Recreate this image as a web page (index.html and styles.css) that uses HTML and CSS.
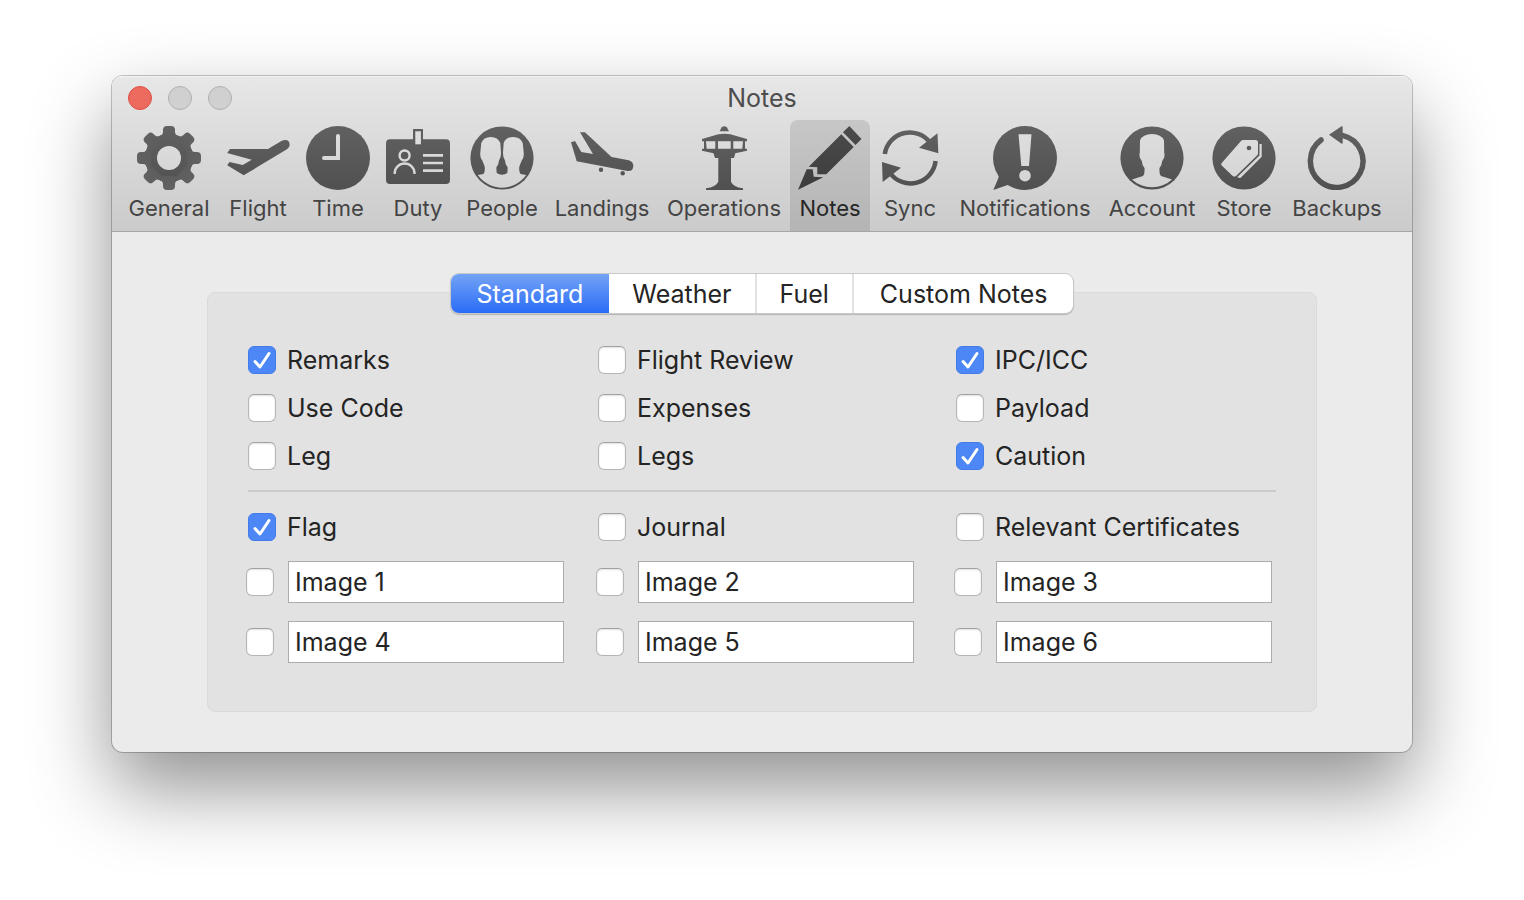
FILE: index.html
```
<!DOCTYPE html>
<html lang="en">
	<head>
		<title>Notes</title>
		<meta charset="utf-8">
		<link rel="stylesheet" href="styles.css">
	</head>

	<body>
		<!-- Shared gradients for the toolbar icons -->
		<svg class="defs" aria-hidden="true">
			<defs>
				<linearGradient id="ink" gradientUnits="userSpaceOnUse" x1="0" y1="0" x2="0" y2="64">
					<stop offset="0" stop-color="#616161"/>
					<stop offset="1" stop-color="#505050"/>
				</linearGradient>
				<linearGradient id="ink_dark" gradientUnits="userSpaceOnUse" x1="0" y1="0" x2="0" y2="64">
					<stop offset="0" stop-color="#4b4b4b"/>
					<stop offset="1" stop-color="#3c3c3c"/>
				</linearGradient>
				<linearGradient id="paper" gradientUnits="userSpaceOnUse" x1="0" y1="0" x2="0" y2="64">
					<stop offset="0" stop-color="#dfdfdf"/>
					<stop offset="1" stop-color="#d3d3d3"/>
				</linearGradient>
			</defs>
		</svg>

		<div class="window">
			<header class="header">
				<div class="titlebar">
					<div class="lights">
						<button class="light light_close" aria-label="Close"></button>
						<button class="light" aria-label="Minimize"></button>
						<button class="light" aria-label="Zoom"></button>
					</div>
					<h1 class="title">Notes</h1>
				</div>

				<nav class="toolbar">
					<button class="tool">
						<svg class="icon" viewBox="0 0 64 64">
							<defs>
								<path id="tooth" d="M26 4Q26 0 30 0H34Q38 0 38 4V6Q38 9.5 43 10.5V14H21V10.5Q26 9.5 26 6Z"/>
							</defs>
							<circle cx="32" cy="32" r="24"/>
							<use href="#tooth"/>
							<use href="#tooth" transform="rotate(45 32 32)"/>
							<use href="#tooth" transform="rotate(90 32 32)"/>
							<use href="#tooth" transform="rotate(135 32 32)"/>
							<use href="#tooth" transform="rotate(180 32 32)"/>
							<use href="#tooth" transform="rotate(225 32 32)"/>
							<use href="#tooth" transform="rotate(270 32 32)"/>
							<use href="#tooth" transform="rotate(315 32 32)"/>
							<circle class="cut" cx="32" cy="32" r="12"/>
						</svg>
						General
					</button>
					<button class="tool">
						<svg class="icon" viewBox="0 0 64 64">
							<path d="M4 23H42L55 15.3C60 12.5 64.5 14.5 63.5 19.5C63.2 21.3 62 22.6 60.5 23.5L17.7 49.3L1.2 39.2L3.5 36L16.7 39L25.7 33.7L1.2 27Z"/>
						</svg>
						Flight
					</button>
					<button class="tool">
						<svg class="icon" viewBox="0 0 64 64">
							<circle cx="32" cy="32" r="32"/>
							<path class="cut_line" stroke-width="4" stroke-linecap="round" d="M32 10V32H18"/>
						</svg>
						Time
					</button>
					<button class="tool">
						<svg class="icon" viewBox="0 0 64 64">
							<rect x="0" y="13.3" width="64" height="44.7" rx="4"/>
							<rect x="27" y="3" width="10" height="15"/>
							<rect class="cut" x="29.3" y="5.3" width="5.6" height="13"/>
							<circle class="cut_line" stroke-width="2.4" cx="18.6" cy="29.5" r="5"/>
							<path class="cut_line" stroke-width="2.4" d="M8.7 48V47A9.9 9.5 0 0 1 28.5 47V48"/>
							<path class="cut_line" stroke-width="2.7" d="M37 29.3H57M37 37H57M37 44.7H57"/>
						</svg>
						Duty
					</button>
					<button class="tool">
						<svg class="icon" viewBox="0 0 64 64">
							<circle cx="32" cy="32" r="31.6"/>
							<path class="cut" d="M7.8 49L13.5 48Q15.5 45 14.5 40L12.3 34.5Q9.7 31 10.3 26.5L11.3 17Q13.5 11 20.7 11Q28 11 30.3 17L31 26.5Q31.3 31 29 34.5Q29 38 26.3 41.5L26.7 47Q29 48.8 32 48.8Q35 48.8 37.3 47L37.7 41.5Q35 38 35 34.5Q32.7 31 33 26.5L33.7 17Q36 11 43.3 11Q50.5 11 52.7 17L53.7 26.5Q54.3 31 51.7 34.5L49.5 40Q48.5 45 50.5 48L56.2 49A29.5 29.5 0 0 1 7.8 49Z"/>
						</svg>
						People
					</button>
					<button class="tool">
						<svg class="icon" viewBox="0 0 64 64">
							<path d="M10 6.3H15L41.5 31L58.7 34.2C62 35 63.6 37.5 63.3 40.5C62.9 43.8 61 45.5 57.5 45L6.7 35.3L1 16.3L5 15L11.3 26L23 28Z"/>
							<circle cx="31" cy="43.7" r="2.2"/>
							<circle cx="52.7" cy="47.3" r="2.2"/>
						</svg>
						Landings
					</button>
					<button class="tool">
						<svg class="icon" viewBox="0 0 64 64">
							<path d="M27.7 5.3L29.5 1.5Q32.3 -1 35 1.5L37 5.3Z"/>
							<path d="M10 13L26.3 8.3Q32.3 7.3 38.3 8.3L55 13V15.3H53V22.7H55V24.7L43.3 27.3L42 32H39V55.7Q41 61 51 62.3V64H14V62.3Q24 61 26.3 55.7V32H23L21.5 27.3L10 24.7V22.7H12V15.3H10Z"/>
							<path class="cut" d="M14 15.3H23.3V22.7H14.7ZM26 15.3H38.7V22.7H26ZM41.3 15.3H51L50.3 22.7H41.3Z"/>
						</svg>
						Operations
					</button>
					<button class="tool tool_selected">
						<svg class="icon" viewBox="0 0 64 64">
							<path d="M51.3 0L63.5 13L57.5 19L45 6.3Z"/>
							<path d="M43.3 8.3L55.7 21L28.3 48.3H19.3V41.3L10.7 40.7Z"/>
							<path d="M8.7 43.3H14.7L15.7 50.7L25.3 51.3L0 63.7Z"/>
						</svg>
						Notes
					</button>
					<button class="tool">
						<svg class="icon" viewBox="0 0 64 64">
							<path class="line" stroke-width="4.5" d="M6.8 28A25.3 25.3 0 0 1 52 16.5M57.6 35A25.3 25.3 0 0 1 12 47"/>
							<path d="M59.5 7.3L60.3 27.3L41 21.7ZM4 36L23 41.7L4.7 56Z"/>
						</svg>
						Sync
					</button>
					<button class="tool">
						<svg class="icon" viewBox="0 0 64 64">
							<circle cx="32" cy="32" r="32"/>
							<path d="M4 44Q7 49 5 53L0.3 64L15.3 58.7L24 60Z"/>
							<path class="cut" d="M25.5 8.3H38.5L36 40H28.3Z"/>
							<circle class="cut" cx="32" cy="49.7" r="5.8"/>
						</svg>
						Notifications
					</button>
					<button class="tool">
						<svg class="icon" viewBox="0 0 64 64">
							<circle cx="32" cy="32" r="31.6"/>
							<path class="cut" d="M12 53.5L23 50Q25 48 24.5 42Q22 39 21.8 35Q18.5 31 19.8 26.5L20 14.5Q22.5 8 32 8Q41.5 8 44 14.5L44.2 26.5Q45.5 31 42.2 35Q42 39 39.5 42Q39 48 41 50L52 53.5A29.5 29.5 0 0 1 12 53.5Z"/>
						</svg>
						Account
					</button>
					<button class="tool">
						<svg class="icon" viewBox="0 0 64 64">
							<circle cx="32" cy="32" r="31.6"/>
							<path class="cut" d="M31 14H43.5Q46 14 46 16.7V27.5Q46 28.7 45 29.5L24 50Q22.3 51 20.7 50L9.7 39.5Q8.5 38.3 9.7 37L29 15Q30 14 31 14Z"/>
							<path class="cut" d="M47.5 18H49.7V30.7L28.7 51.7Q27 52.3 25.3 51L47.5 29.5Z"/>
							<circle cx="37" cy="22" r="2.3"/>
						</svg>
						Store
					</button>
					<button class="tool">
						<svg class="icon" viewBox="0 0 64 64">
							<path class="line" stroke-width="5.5" stroke-linecap="round" d="M16 14A26.3 26.3 0 1 0 38 9.6"/>
							<path d="M24 8.7L36.5 0.3Q37.7 0 37.7 1V17Q37.5 18 36.3 17.5Z"/>
						</svg>
						Backups
					</button>
				</nav>
			</header>

			<main class="content">
				<section class="panel">
					<div class="tabs">
						<button class="tab tab_selected">Standard</button>
						<button class="tab">Weather</button>
						<button class="tab">Fuel</button>
						<button class="tab">Custom Notes</button>
					</div>

					<div class="options">
						<label class="option"><input class="check" type="checkbox" checked>Remarks</label>
						<label class="option"><input class="check" type="checkbox">Flight Review</label>
						<label class="option"><input class="check" type="checkbox" checked>IPC/ICC</label>
						<label class="option"><input class="check" type="checkbox">Use Code</label>
						<label class="option"><input class="check" type="checkbox">Expenses</label>
						<label class="option"><input class="check" type="checkbox">Payload</label>
						<label class="option"><input class="check" type="checkbox">Leg</label>
						<label class="option"><input class="check" type="checkbox">Legs</label>
						<label class="option"><input class="check" type="checkbox" checked>Caution</label>
					</div>

					<hr class="divider">

					<div class="options">
						<label class="option"><input class="check" type="checkbox" checked>Flag</label>
						<label class="option"><input class="check" type="checkbox">Journal</label>
						<label class="option"><input class="check" type="checkbox">Relevant Certificates</label>
					</div>

					<div class="options images">
						<div class="image"><input class="check" type="checkbox" aria-label="Use image 1"><input class="field" type="text" value="Image 1" aria-label="Image 1 name"></div>
						<div class="image"><input class="check" type="checkbox" aria-label="Use image 2"><input class="field" type="text" value="Image 2" aria-label="Image 2 name"></div>
						<div class="image"><input class="check" type="checkbox" aria-label="Use image 3"><input class="field" type="text" value="Image 3" aria-label="Image 3 name"></div>
						<div class="image"><input class="check" type="checkbox" aria-label="Use image 4"><input class="field" type="text" value="Image 4" aria-label="Image 4 name"></div>
						<div class="image"><input class="check" type="checkbox" aria-label="Use image 5"><input class="field" type="text" value="Image 5" aria-label="Image 5 name"></div>
						<div class="image"><input class="check" type="checkbox" aria-label="Use image 6"><input class="field" type="text" value="Image 6" aria-label="Image 6 name"></div>
					</div>
				</section>
			</main>
		</div>
	</body>
</html>
```
FILE: styles.css
```
* {
	box-sizing: border-box;
}

body {
	min-height: 100vh;
	margin: 0;
	padding: 76px 112px;
	background-color: #FFF;
	color: #242424;
	font-family: Inter, "Liberation Sans", sans-serif;
	font-size: 25px;
}

button, input {
	font: inherit;
	color: inherit;
	margin: 0;
}

.defs {
	position: absolute;
	width: 0;
	height: 0;
}

.window {
	background-color: #EBEBEB;
	border-radius: 11px;
	box-shadow: 0 0 0 1px rgba(0,0,0,0.22), 0 36px 80px rgba(0,0,0,0.44);
}

/* Title bar and toolbar */
.header {
	background: linear-gradient(#E7E7E7, #CBCBCB);
	border-bottom: 1px solid #A5A5A5;
	border-radius: 11px 11px 0 0;
	box-shadow: inset 0 1px 0 #F3F3F3;
}

.titlebar {
	display: grid;
	grid-template-columns: 1fr auto 1fr;
	align-items: center;
	height: 44px;
	padding: 0 16px;
}

.lights {
	display: flex;
	gap: 16px;
}

.light {
	width: 24px;
	height: 24px;
	padding: 0;
	background-color: #D0D0D0;
	border: 1px solid #B0B0B0;
	border-radius: 50%;
}

.light_close {
	background-color: #ED6A5E;
	border-color: #DC4F45;
}

.title {
	margin: 0;
	color: #4D4D4D;
	font-size: 25px;
	font-weight: 400;
}

.toolbar {
	display: grid;
	grid-template-columns: 98px 80px 80px 80px 88px 112px 132px 80px 80px 150px 104px 80px 106px;
	padding: 0 8px;
}

.tool {
	display: flex;
	flex-direction: column;
	align-items: center;
	gap: 4px;
	height: 111px;
	padding: 6px 0 0;
	background: none;
	border: none;
	color: #444;
	font-size: 22px;
	line-height: 28px;
}

.tool_selected {
	background: linear-gradient(#C7C7C7, #B4B4B4);
	border-radius: 8px 8px 0 0;
	color: #262626;
}

.icon {
	flex: none;
	width: 64px;
	height: 64px;
	fill: url(#ink);
}

.tool_selected .icon {
	fill: url(#ink_dark);
}

.cut {
	fill: url(#paper);
}

.cut_line {
	fill: none;
	stroke: url(#paper);
}

.line {
	fill: none;
	stroke: url(#ink);
}

/* Content */
.content {
	padding: 60px 95px 40px;
}

.panel {
	padding: 0 40px 39px;
	background-color: #E2E2E2;
	border: 1px solid #DADADA;
	border-radius: 8px;
}

.tabs {
	display: flex;
	width: fit-content;
	margin: -19px auto 23px;
	background-color: #FFF;
	border-radius: 8px;
	box-shadow: 0 0 0 1px #C9C9C9, 0 1px 1px 1px rgba(0,0,0,0.2);
}

.tab {
	height: 39px;
	padding: 0 23px;
	background: none;
	border: none;
	border-right: 2px solid #E2E2E2;
}

.tab:last-child {
	padding: 0 26px;
	border-right: none;
}

.tab_selected {
	padding: 0 26px;
	background: linear-gradient(#74A3F5, #2A6CF7);
	border-right: none;
	border-radius: 8px 0 0 8px;
	color: #FFF;
}

.options {
	display: grid;
	grid-template-columns: 350fr 358fr 320fr;
	grid-auto-rows: 48px;
}

.option {
	display: flex;
	align-items: center;
	gap: 11px;
	white-space: nowrap;
}

.check {
	flex: none;
	width: 28px;
	height: 28px;
	appearance: none;
	background-color: #FFF;
	border: 1px solid #B5B5B5;
	border-top-color: #A0A0A0;
	border-radius: 6px;
	box-shadow: inset 0 1px 2px rgba(0,0,0,0.12);
}

.check:checked {
	background: #4C87F5 url("data:image/svg+xml,%3Csvg xmlns='http://www.w3.org/2000/svg' viewBox='0 0 28 28'%3E%3Cpath d='M7 15.5L12 21L21 7.5' fill='none' stroke='white' stroke-width='3' stroke-linecap='round' stroke-linejoin='round'/%3E%3C/svg%3E") center / 28px 28px;
	border-color: #437BEA;
	box-shadow: none;
}

.divider {
	height: 2px;
	margin: 10px 0 11px;
	background-color: #CBCBCB;
	border: none;
}

.images {
	grid-auto-rows: 60px;
	margin: 1px 2px 0 -2px;
}

.image {
	display: flex;
	align-items: center;
	gap: 14px;
}

.field {
	width: 276px;
	height: 42px;
	padding: 0 6px;
	background-color: #FFF;
	border: 1px solid #ABABAB;
	outline: none;
}
```
